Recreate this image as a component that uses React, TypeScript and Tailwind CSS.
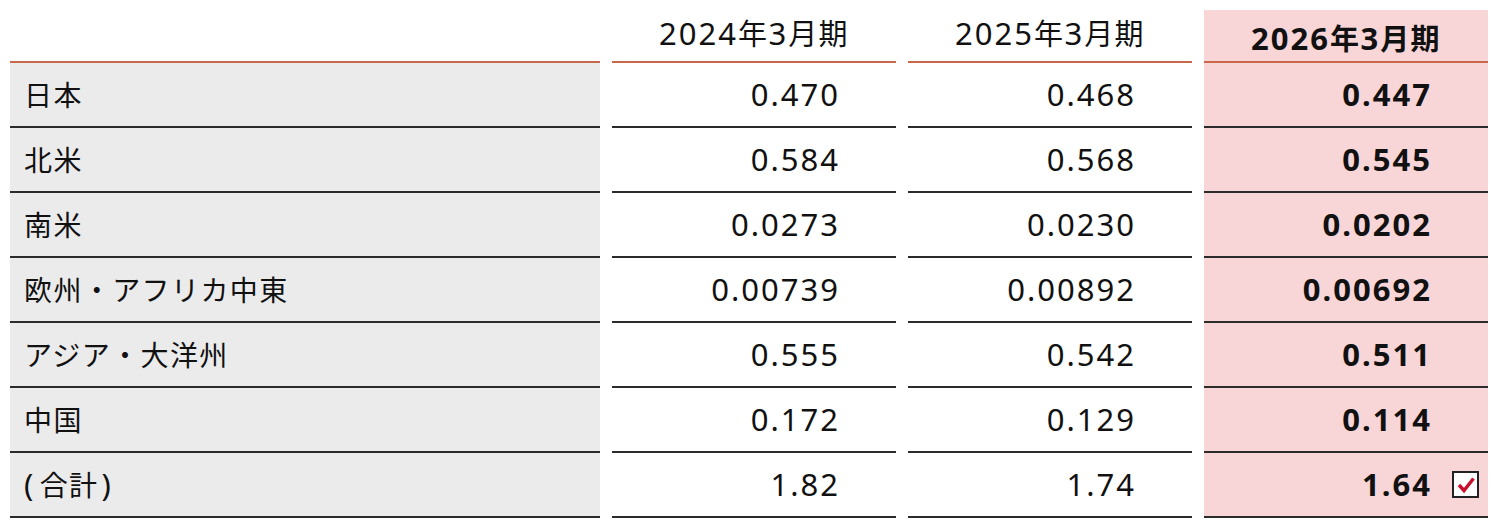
const REGIONS = [
  { name: "日本", y24: "0.470", y25: "0.468", y26: "0.447" },
  { name: "北米", y24: "0.584", y25: "0.568", y26: "0.545" },
  { name: "南米", y24: "0.0273", y25: "0.0230", y26: "0.0202" },
  { name: "欧州・アフリカ中東", y24: "0.00739", y25: "0.00892", y26: "0.00692" },
  { name: "アジア・大洋州", y24: "0.555", y25: "0.542", y26: "0.511" },
  { name: "中国", y24: "0.172", y25: "0.129", y26: "0.114" },
  { name: "(合計)", y24: "1.82", y25: "1.74", y26: "1.64" },
];

const font = { fontFamily: '"Noto Sans", "Noto Sans CJK JP", sans-serif' };

// digits and brackets get the larger latin size, kanji stay at 28px
function Mixed({ text }: { text: string }) {
  return (
    <>
      {text.split(/(\d+|\(|\))/).map((part, i) => {
        if (/\d/.test(part))
          return (
            <span key={i} className="text-[31px] tracking-[0.065em]">
              {part}
            </span>
          );
        if (part === "(") return <span key={i} className="mr-[5px] text-[31px]">(</span>;
        if (part === ")") return <span key={i} className="ml-[3px] text-[31px]">)</span>;
        return <span key={i}>{part}</span>;
      })}
    </>
  );
}

function CheckBox() {
  return (
    <span className="ml-[20px] flex h-[27px] w-[27px] items-center justify-center border-2 border-[#222] bg-white">
      <svg viewBox="0 0 20 20" className="h-[20px] w-[20px]">
        <path d="M3 10 L8 15.5 L17.5 3.5" fill="none" stroke="#c8102e" strokeWidth="3.4" strokeLinejoin="miter" />
      </svg>
    </span>
  );
}

function ValueColumn({
  title,
  field,
  highlight,
}: {
  title: string;
  field: "y24" | "y25" | "y26";
  highlight?: boolean;
}) {
  return (
    <div className={`flex w-[284px] flex-col ${highlight ? "mt-[10px] bg-[#f8d6d8] font-bold" : ""}`}>
      <div
        className={`flex items-center justify-center border-b-2 border-[#c9674b] pt-[5px] text-[29px] ${
          highlight ? "h-[53px]" : "h-[63px]"
        }`}
      >
        <span>
          <Mixed text={title} />
        </span>
      </div>
      {REGIONS.map((r, i) => (
        <div key={r.name} className="flex h-[65px] items-center justify-end border-b-2 border-[#2b2b2b]">
          <span className="text-[31px] tracking-[0.065em]">{r[field]}</span>
          <span className="flex w-[56px] items-center">
            {highlight && i === REGIONS.length - 1 && <CheckBox />}
          </span>
        </div>
      ))}
    </div>
  );
}

export default function App() {
  return (
    <main className="h-[526px] w-[1495px] overflow-hidden bg-white text-[28px] tracking-[0.05em] text-[#111]" style={font}>
      <div className="flex gap-x-[12px] pl-[10px]">
        <div className="flex w-[590px] flex-col">
          <div className="h-[63px] border-b-2 border-[#c9674b]" />
          {REGIONS.map((r) => (
            <div key={r.name} className="flex h-[65px] items-center border-b-2 border-[#2b2b2b] bg-[#ebebec] pl-[14px]">
              <Mixed text={r.name} />
            </div>
          ))}
        </div>
        <ValueColumn title="2024年3月期" field="y24" />
        <ValueColumn title="2025年3月期" field="y25" />
        <ValueColumn title="2026年3月期" field="y26" highlight />
      </div>
    </main>
  );
}
